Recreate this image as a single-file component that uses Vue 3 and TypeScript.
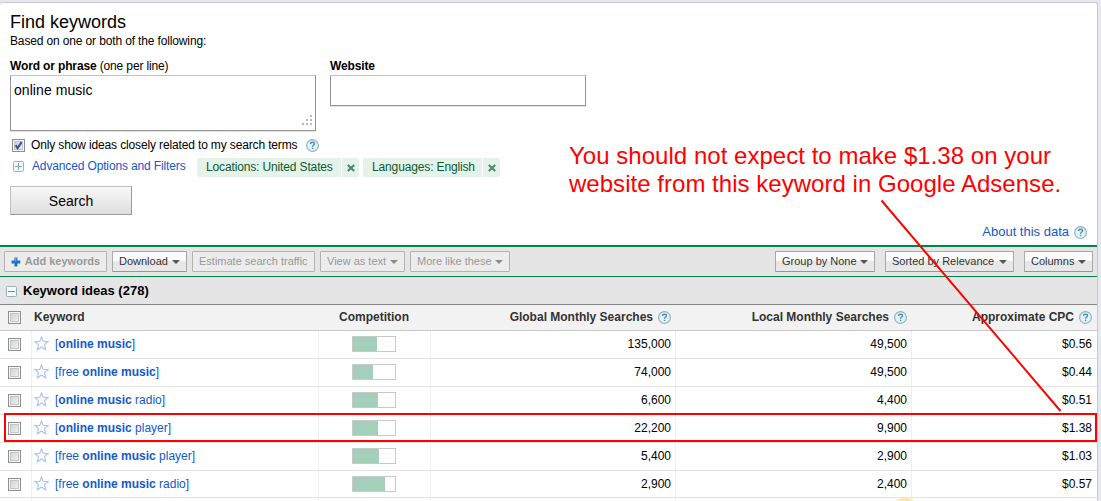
<script setup lang="ts">
import { defineComponent, h } from 'vue'

interface Idea {
  words: { text: string; bold: boolean }[]
  competition: number
  global: string
  local: string
  cpc: string
}

const idea = (pre: string, post: string, competition: number, global: string, local: string, cpc: string): Idea => ({
  words: [
    { text: '[' + pre, bold: false },
    { text: 'online music', bold: true },
    { text: post + ']', bold: false },
  ],
  competition,
  global,
  local,
  cpc,
})

const ideas: Idea[] = [
  idea('', '', 24, '135,000', '49,500', '$0.56'),
  idea('free ', '', 20, '74,000', '49,500', '$0.44'),
  idea('', ' radio', 25, '6,600', '4,400', '$0.51'),
  idea('', ' player', 25, '22,200', '9,900', '$1.38'),
  idea('free ', ' player', 26, '5,400', '2,900', '$1.03'),
  idea('free ', ' radio', 32, '2,900', '2,400', '$0.57'),
]

const filters = ['Locations: United States', 'Languages: English']

const HelpIcon = defineComponent({
  render: () =>
    h('svg', { width: 13, height: 13, viewBox: '0 0 13 13', style: 'display:block;flex:none' }, [
      h('circle', { cx: 6.5, cy: 6.5, r: 5.9, fill: '#e2f3f8', stroke: '#8fb4bc', 'stroke-width': 1.2 }),
      h('path', {
        d: 'M4.6 5.1C4.6 3.7 5.4 3.2 6.5 3.2S8.5 3.8 8.5 4.8C8.5 6 6.6 6 6.6 7.7M6.6 8.7V10.1',
        fill: 'none',
        stroke: '#4f8cba',
        'stroke-width': 1.4,
      }),
    ]),
})
</script>

<template>
  <div class="page">
    <div class="panel">
      <section class="finder">
        <h1>Find keywords</h1>
        <p class="hint tight">Based on one or both of the following:</p>
        <div class="fields">
          <div class="field phrase">
            <label class="tight"><b>Word or phrase</b> (one per line)</label>
            <div class="box area">
              online music
              <svg class="grip" width="10" height="10" viewBox="0 0 10 10" fill="#b8b8b8">
                <path d="M8 0h2v2H8zM4 4h2v2H4zM8 4h2v2H8zM0 8h2v2H0zM4 8h2v2H4zM8 8h2v2H8z" />
              </svg>
            </div>
          </div>
          <div class="field site">
            <label class="tight"><b>Website</b></label>
            <div class="box line"></div>
          </div>
        </div>
        <div class="only">
          <span class="check">
            <svg width="13" height="13" viewBox="0 0 13 13">
              <path d="M3.6 6.2L5.6 9.2L9.6 3.2" fill="none" stroke="#39579b" stroke-width="2.1" />
            </svg>
          </span>
          <span class="only-text tight">Only show ideas closely related to my search terms</span>
          <HelpIcon />
        </div>
        <div class="advanced">
          <svg class="toggle" width="11" height="11" viewBox="0 0 11 11">
            <rect x=".5" y=".5" width="10" height="10" rx="1" fill="#f3fafc" stroke="#93b5c3" />
            <path d="M2 5.5h7M5.5 2v7" stroke="#7fa9ba" />
          </svg>
          <a class="adv-link tight">Advanced Options and Filters</a>
          <span v-for="f in filters" :key="f" class="chip">
            <span class="chip-text tight">{{ f }}</span>
            <span class="chip-x">
              <svg width="8" height="8" viewBox="0 0 8 8">
                <path d="M.8 1L7.2 7M7.2 1L.8 7" stroke="#4a8a6c" stroke-width="2.1" />
              </svg>
            </span>
          </span>
        </div>
        <div class="search">Search</div>
        <div class="about"><a>About this data</a><HelpIcon /></div>
      </section>

      <div class="toolbar">
        <span class="btn off add">
          <svg width="10" height="10" viewBox="0 0 10 10">
            <path d="M3.5 .5h3v3h3v3h-3v3h-3v-3h-3v-3h3z" fill="#1f6fc4" />
            <path d="M4 1h1.5v3.2H1V4h3z" fill="#5ca4e6" />
          </svg>
          <b>Add keywords</b>
        </span>
        <span class="btn download">Download<i class="arrow"></i></span>
        <span class="btn off estimate">Estimate search traffic</span>
        <span class="btn off astext">View as text<i class="arrow"></i></span>
        <span class="btn off more">More like these<i class="arrow"></i></span>
        <span class="btn group">Group by None<i class="arrow"></i></span>
        <span class="btn sorted">Sorted by Relevance<i class="arrow"></i></span>
        <span class="btn columns">Columns<i class="arrow"></i></span>
      </div>

      <div class="section">
        <svg class="minus" width="11" height="11" viewBox="0 0 11 11">
          <rect x=".5" y=".5" width="10" height="10" rx="1" fill="#f6fbfd" stroke="#8fb2c0" />
          <path d="M2 5.5h7" stroke="#5b93aa" />
        </svg>
        <b>Keyword ideas (278)</b>
      </div>

      <div class="row head">
        <div class="cell pick"><span class="check"></span></div>
        <div class="cell name">Keyword</div>
        <div class="cell comp">Competition</div>
        <div class="cell num">Global Monthly Searches<HelpIcon /></div>
        <div class="cell num">Local Monthly Searches<HelpIcon /></div>
        <div class="cell num last">Approximate CPC<HelpIcon /></div>
      </div>

      <div v-for="(k, i) in ideas" :key="i" class="row">
        <div class="cell pick"><span class="check"></span></div>
        <div class="cell name">
          <svg class="star" width="15" height="15" viewBox="0 0 15 15">
            <path
              d="M7.5 1L9.2 5.3L14 5.6L10.5 8.7L11.7 13.8L7.5 11L3.3 13.8L4.5 8.7L1 5.6L5.8 5.3Z"
              fill="#fff"
              stroke="#a9c2ee"
              stroke-width="1.1"
            />
          </svg>
          <a class="kw"><span v-for="(w, j) in k.words" :key="j" :class="{ bold: w.bold }">{{ w.text }}</span></a>
        </div>
        <div class="cell comp"><span class="meter"><i :style="{ width: k.competition + 'px' }"></i></span></div>
        <div class="cell num">{{ k.global }}</div>
        <div class="cell num">{{ k.local }}</div>
        <div class="cell num last">{{ k.cpc }}</div>
      </div>
      <div class="row stub">
        <div v-for="n in 6" :key="n" class="cell" :class="{ last: n === 6 }"></div>
      </div>
    </div>

    <div class="spot"></div>
    <div class="callout">You should not expect to make $1.38 on your<br />website from this keyword in Google Adsense.</div>
    <div class="frame"></div>
    <svg class="pointer" width="1101" height="501" viewBox="0 0 1101 501">
      <path d="M881.5 200.5L1060.5 411" stroke="#f00" stroke-width="2" />
    </svg>
  </div>
</template>

<style>
body {
  margin: 0;
  overflow: hidden;
}
</style>

<style scoped>
.page {
  position: relative;
  width: 1101px;
  height: 501px;
  overflow: hidden;
  box-sizing: border-box;
  padding-top: 2px;
  background: #e5e8ef;
  font: 12px/16px 'Liberation Sans', Arial, sans-serif;
  color: #000;
}
.panel {
  box-sizing: border-box;
  width: 1098px;
  height: 520px;
  background: #fff;
  border: solid #c8cacf;
  border-width: 1px 1px 0 0;
  border-radius: 3px 3px 0 0;
}
.tight {
  letter-spacing: -0.14px;
}
a {
  color: #1359cb;
}
.finder {
  box-sizing: border-box;
  height: 242px;
  padding: 8px 10px 0;
}
h1 {
  margin: 0;
  font-size: 18px;
  line-height: 22px;
  font-weight: normal;
}
.hint {
  margin: 0;
}
.fields {
  display: flex;
  gap: 14px;
  margin-top: 9px;
  height: 73px;
}
.phrase {
  width: 306px;
}
.site {
  width: 256px;
}
.field label {
  display: block;
  margin-bottom: 1px;
}
.box {
  position: relative;
  box-sizing: border-box;
  border: 1px solid #949494;
  border-top-color: #c3c3c3;
  box-shadow: 0 1px 0 #e4e4e4;
  font-size: 14px;
  line-height: 18px;
}
.area {
  height: 56px;
  padding: 5px 3px;
  letter-spacing: 0.06px;
}
.line {
  height: 31px;
}
.grip {
  position: absolute;
  right: 3px;
  bottom: 5px;
}
.only {
  display: flex;
  align-items: center;
  margin: 6px 0 0 2px;
  height: 16px;
}
.only-text {
  width: 275px;
  margin-left: 6px;
}
.check {
  display: block;
  box-sizing: border-box;
  flex: none;
  width: 13px;
  height: 13px;
  border: 1px solid #8e8f8f;
  background: linear-gradient(135deg, #c9cdd1, #f5f5f5);
  box-shadow: inset 0 0 0 1px #f6f6f6, inset 0 0 0 2px #c3c5c8;
}
.check svg {
  display: block;
  margin: -1px;
}
.advanced {
  display: flex;
  align-items: flex-start;
  height: 19px;
  margin: 5px 0 0 3px;
}
.toggle {
  margin-top: 3px;
}
.adv-link {
  width: 165px;
  margin-left: 8px;
}
.chip {
  display: flex;
  box-sizing: border-box;
  width: 162px;
  height: 19px;
  line-height: 19px;
  margin-right: 4px;
  background: #e4f2ea;
  border-radius: 2px;
  color: #0b5a30;
}
.chip + .chip {
  width: 137px;
}
.chip-text {
  flex: 1;
  padding-left: 9px;
  border-right: 1px solid #fff;
  white-space: nowrap;
}
.chip-x {
  display: flex;
  align-items: center;
  justify-content: center;
  width: 17px;
}
.search {
  box-sizing: border-box;
  width: 122px;
  height: 29px;
  margin-top: 9px;
  border: 1px solid #999;
  border-top-color: #c0c0c0;
  border-left-color: #c0c0c0;
  background: linear-gradient(#f8f8f8, #dedede);
  font-size: 14px;
  line-height: 28px;
  text-align: center;
}
.about {
  display: flex;
  align-items: center;
  justify-content: flex-end;
  gap: 5px;
  height: 16px;
  margin-top: 9px;
  font-size: 13px;
}
.about svg {
  margin-top: 1px;
}
.toolbar {
  display: flex;
  box-sizing: border-box;
  height: 32px;
  padding: 4px 4px 0;
  border-top: 2px solid #00864b;
  border-bottom: 1px solid #00864b;
  background: #e5e5e5;
  gap: 5px;
  font-size: 11px;
  line-height: 18px;
}
.btn {
  display: flex;
  box-sizing: border-box;
  height: 21px;
  padding: 0 6px;
  border: 1px solid #a9a9a9;
  border-bottom-color: #969696;
  border-radius: 1px;
  background: linear-gradient(#fbfbfb 45%, #e6e6e6 50%, #e9e9e9);
  color: #333;
  white-space: nowrap;
}
.off {
  background: #ececec;
  border-color: #b3b3b3;
  color: #999;
}
.add {
  width: 103px;
}
.add svg {
  margin: 5px 4px 0 0;
}
.download {
  width: 75px;
}
.estimate {
  width: 123px;
}
.astext {
  width: 85px;
}
.more {
  width: 100px;
}
.group {
  width: 100px;
  margin-left: auto;
}
.sorted {
  width: 129px;
  margin: 0 5px;
}
.columns {
  width: 69px;
}
.arrow {
  margin: 8px 0 0 auto;
  width: 0;
  height: 0;
  border: 3.5px solid transparent;
  border-width: 4px 4px 0;
  border-top-color: #555;
}
.off .arrow {
  border-top-color: #8c8c8c;
}
.section {
  display: flex;
  box-sizing: border-box;
  height: 28px;
  padding-left: 6px;
  border-bottom: 1px solid #868686;
  background: #e5e5e5;
  font-size: 13px;
  line-height: 27px;
}
.minus {
  margin: 9px 6px 0 0;
}
.row {
  display: grid;
  grid-template-columns: 32px 287px 112px 245px 236px 185px;
  box-sizing: border-box;
  height: 28px;
  border-bottom: 1px solid #e3e3e3;
}
.row:nth-last-child(2) {
  height: 27px;
}
.cell {
  display: flex;
  box-sizing: border-box;
  padding-top: 5px;
  border-right: 1px solid #efefef;
}
.cell.last {
  border-right: 0;
}
.head {
  height: 26px;
  border-bottom-color: #c8c8c8;
  background: #f2f2f2;
  color: #333;
  font-weight: bold;
}
.head .cell {
  padding-top: 4px;
  border-right-color: transparent;
}
.row .pick {
  padding: 7px 0 0 8px;
}
.head .pick {
  padding-top: 6px;
}
.name {
  padding-left: 2px;
}
.star {
  margin: 0 6px 0 0;
}
.kw {
  white-space: pre;
}
.bold {
  font-weight: bold;
}
.cell.comp {
  justify-content: center;
  padding-right: 1px;
}
.meter {
  box-sizing: border-box;
  width: 44px;
  height: 16px;
  border: 1px solid #c8c8c8;
  background: #fff;
}
.meter i {
  display: block;
  height: 14px;
  background: #a4d0bb;
}
.num {
  justify-content: flex-end;
  padding-right: 4px;
}
.num.last {
  padding-right: 5px;
}
.num svg {
  margin: 2px 0 0 5px;
}
.callout {
  position: absolute;
  left: 569px;
  top: 142px;
  color: #f00;
  font-size: 24px;
  line-height: 28px;
  letter-spacing: 0.03px;
  white-space: nowrap;
}
.frame {
  position: absolute;
  box-sizing: border-box;
  left: 4px;
  top: 413px;
  width: 1093px;
  height: 29px;
  border: 2px solid #f00;
}
.pointer {
  position: absolute;
  left: 0;
  top: 0;
}
.spot {
  position: absolute;
  left: 895px;
  top: 498px;
  width: 20px;
  height: 12px;
  border-radius: 50% / 40%;
  background: #f9e9a6;
}
</style>
